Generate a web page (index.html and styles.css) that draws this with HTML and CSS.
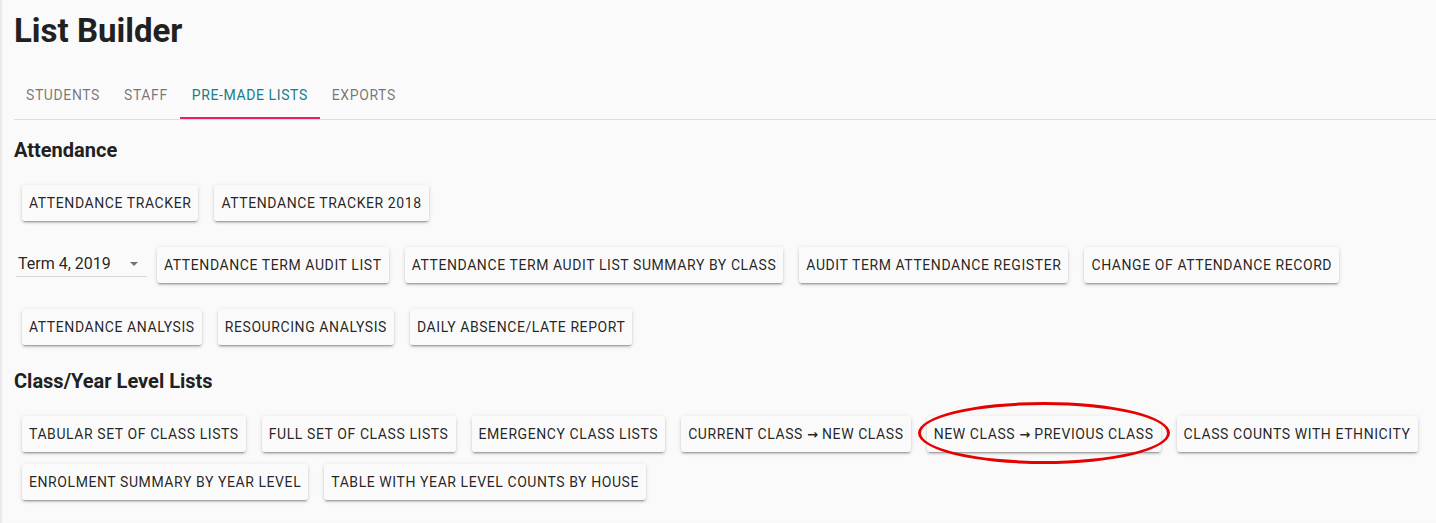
FILE: index.html
```html
<!DOCTYPE html>
<html lang="en">
<head>
<meta charset="utf-8">
<title>List Builder</title>
<link rel="stylesheet" href="styles.css">
</head>
<body>
<div class="page">
  <h1 class="title">List Builder</h1>
  <nav class="tabs">
    <div class="tab">Students</div>
    <div class="tab">Staff</div>
    <div class="tab active">Pre-made Lists</div>
    <div class="tab">Exports</div>
  </nav>

  <h2 class="section-title">Attendance</h2>
  <div class="row">
    <button class="btn">Attendance Tracker</button>
    <button class="btn">Attendance Tracker 2018</button>
  </div>
  <div class="row">
    <div class="select">
      <span class="select-value">Term 4, 2019</span>
      <svg class="select-arrow" width="8" height="4" viewBox="0 0 8 4"><path d="M0 0h8L4 4z" fill="rgba(0,0,0,0.54)"/></svg>
    </div>
    <button class="btn">Attendance Term Audit List</button>
    <button class="btn">Attendance Term Audit List Summary by Class</button>
    <button class="btn">Audit Term Attendance Register</button>
    <button class="btn">Change of Attendance Record</button>
  </div>
  <div class="row">
    <button class="btn">Attendance Analysis</button>
    <button class="btn">Resourcing Analysis</button>
    <button class="btn">Daily Absence/Late Report</button>
  </div>

  <h2 class="section-title">Class/Year Level Lists</h2>
  <div class="row">
    <button class="btn">Tabular Set of Class Lists</button>
    <button class="btn">Full Set of Class Lists</button>
    <button class="btn">Emergency Class Lists</button>
    <button class="btn">Current Class <span class="arrow">&#8594;</span> New Class</button>
    <button class="btn">New Class <span class="arrow">&#8594;</span> Previous Class</button>
    <button class="btn">Class Counts with Ethnicity</button>
    <button class="btn">Enrolment Summary by Year Level</button>
    <button class="btn">Table with Year Level Counts by House</button>
  </div>
</div>
<div class="annotation"></div>
</body>
</html>
```

FILE: styles.css
```css
* { box-sizing: border-box; }

html, body {
  margin: 0;
  padding: 0;
  background: #fafafa;
}

body {
  font-family: Roboto, "Liberation Sans", Arial, sans-serif;
  color: rgba(0, 0, 0, 0.87);
  min-height: 523px;
  position: relative;
  box-shadow: inset 3px 0 3px -2px rgba(0, 0, 0, 0.12);
}

.page {
  padding: 0 0 0 14px;
}

.title {
  margin: 0;
  padding-top: 11px;
  font-size: 33px;
  line-height: 40px;
  font-weight: 700;
  color: #212121;
}

.tabs {
  display: flex;
  margin-top: 20px;
  height: 49px;
  border-bottom: 1px solid #dedede;
}

.tab {
  height: 48px;
  padding: 2px 12px 0;
  display: flex;
  align-items: center;
  font-size: 14px;
  font-weight: 400;
  letter-spacing: 0.6px;
  text-transform: uppercase;
  color: rgba(0, 0, 0, 0.54);
  border-bottom: 2px solid transparent;
}

.tab.active {
  color: #1b7a8c;
  border-bottom-color: #e91e63;
}

.section-title {
  margin: 18px 0 17px;
  font-size: 20px;
  line-height: 24px;
  font-weight: 700;
  color: #212121;
}

.row {
  display: flex;
  flex-wrap: wrap;
  align-items: flex-start;
  margin-bottom: 14px;
}

.btn {
  margin: 6px 8px;
  height: 36px;
  min-width: 64px;
  padding: 0 7px;
  border: 0;
  border-radius: 3px;
  background: #fafafa;
  font-family: Roboto, "Liberation Sans", Arial, sans-serif;
  font-size: 14px;
  font-weight: 400;
  letter-spacing: 0.58px;
  text-transform: uppercase;
  color: rgba(0, 0, 0, 0.87);
  box-shadow: 0 3px 1px -2px rgba(0, 0, 0, 0.2), 0 2px 2px 0 rgba(0, 0, 0, 0.14), 0 1px 5px 0 rgba(0, 0, 0, 0.12);
  cursor: pointer;
  white-space: nowrap;
}

.arrow {
  font-family: "DejaVu Sans", sans-serif;
  font-size: 13px;
  font-weight: 700;
  letter-spacing: 0;
}

.select {
  margin: 13px 2px 0 2px;
  width: 131px;
  height: 23px;
  padding: 0 0 2px 2px;
  display: flex;
  align-items: center;
  justify-content: space-between;
  border-bottom: 1px solid #d6d6d6;
  font-size: 16px;
  line-height: 20px;
}

.select-value {
  color: rgba(0, 0, 0, 0.87);
}

.select-arrow {
  margin-right: 9px;
  margin-top: -1px;
}

.annotation {
  position: absolute;
  left: 918px;
  top: 402px;
  width: 252px;
  height: 62px;
  border: 3px solid #e60000;
  border-radius: 50%;
  pointer-events: none;
}
```
